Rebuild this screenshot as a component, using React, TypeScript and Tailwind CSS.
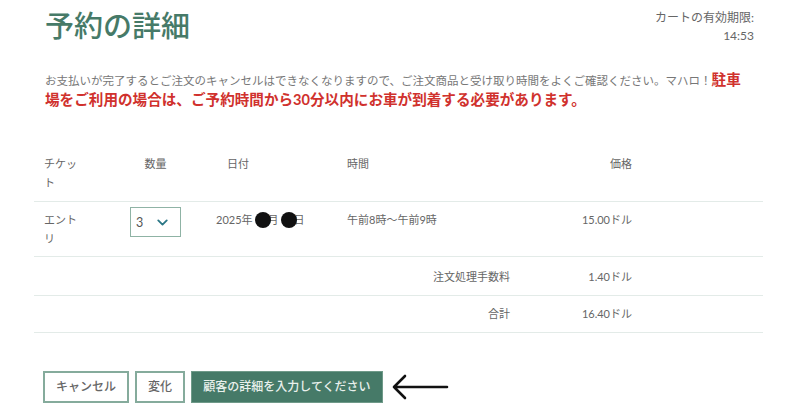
import { ChevronDown } from 'lucide-react';

const font = { fontFamily: 'Lato, "Noto Sans CJK JP", sans-serif' };

function Dot() {
    return <span className="inline-block w-[16px] h-[16px] rounded-full bg-[#111] align-middle ml-[2px] -mr-[3px] relative -top-[1px]" />;
}

export default function App() {
    const cell = 'px-[10px]';
    return (
        <div className="w-[800px] h-[420px] bg-white text-[#666] overflow-hidden" style={font}>
            <div className="ml-[34px] w-[729px]">
                <div className="flex justify-between items-start pt-[9px] pl-[11px] pr-[9px]">
                    <h1 className="text-[29px] leading-[34px] font-medium text-[#467a68]">予約の詳細</h1>
                    <div className="text-[12px] leading-[18px] text-right text-[#666]">
                        <div>カートの有効期限:</div>
                        <div>14:53</div>
                    </div>
                </div>

                <p className="mt-[25px] pl-[11px] w-[711px] text-[11.5px] leading-[19px] text-[#777]">
                    お支払いが完了するとご注文のキャンセルはできなくなりますので、ご注文商品と受け取り時間をよくご確認ください。マハロ！
                    <span className="text-[14.6px] font-bold text-[#d0312d]">駐車場をご利用の場合は、ご予約時間から30分以内にお車が到着する必要があります。</span>
                </p>

                <div className="mt-[44px] text-[11px] leading-[19px] text-[#666]">
                    <div className="grid grid-cols-[96px_86px_130px_186px_100px_131px] pb-[9px] border-b border-[#e3ebe8]">
                        <div className={cell}><div className="w-[38px]">チケット</div></div>
                        <div><div className="w-[51px] text-center">数量</div></div>
                        <div className="pl-[11px]">日付</div>
                        <div className="pl-[1px]">時間</div>
                        <div className="text-right">価格</div>
                        <div />
                    </div>

                    <div className="grid grid-cols-[96px_86px_130px_186px_100px_131px] pt-[8px] pb-[8px] border-b border-[#e3ebe8]">
                        <div className={cell}><div className="w-[38px]">エントリ</div></div>
                        <div>
                            <div className="-mt-[3px] w-[51px] h-[30px] border border-[#8fb3a5] flex items-center justify-between pl-[5px] pr-[9px] text-[12.5px] text-[#555]">
                                <span>3</span>
                                <ChevronDown size={17} strokeWidth={2.6} className="text-[#2b7786]" />
                            </div>
                        </div>
                        <div className="whitespace-nowrap">
                            2025年<Dot />月<Dot />日
                        </div>
                        <div className="pl-[1px]">午前8時～午前9時</div>
                        <div className="text-right">15.00ドル</div>
                        <div />
                    </div>

                    <div className="grid grid-cols-[476px_22px_100px_131px] pt-[10px] pb-[9px] border-b border-[#e3ebe8]">
                        <div className="text-right">注文処理手数料</div>
                        <div />
                        <div className="text-right">1.40ドル</div>
                        <div />
                    </div>

                    <div className="grid grid-cols-[476px_22px_100px_131px] pt-[8px] pb-[9px] border-b border-[#e3ebe8]">
                        <div className="text-right">合計</div>
                        <div />
                        <div className="text-right">16.40ドル</div>
                        <div />
                    </div>
                </div>

                <div className="mt-[38px] ml-[9px] flex items-center gap-[6px] text-[12px]">
                    <button className="w-[86px] h-[32px] border-2 border-[#85ab9c] text-[#666] font-medium">キャンセル</button>
                    <button className="w-[50px] h-[32px] border-2 border-[#85ab9c] text-[#666] font-medium">変化</button>
                    <button className="w-[192px] h-[32px] bg-[#467a68] border border-[#6f9a89] text-[#e9f0ec] font-medium">顧客の詳細を入力してください</button>
                    <svg width="58" height="26" viewBox="0 0 58 26" className="ml-[2px]">
                        <path d="M56 13 H3 M14 2 L3 13 L14 24" fill="none" stroke="#111" strokeWidth="2.6" strokeLinecap="round" strokeLinejoin="round" />
                    </svg>
                </div>
            </div>
        </div>
    );
}
